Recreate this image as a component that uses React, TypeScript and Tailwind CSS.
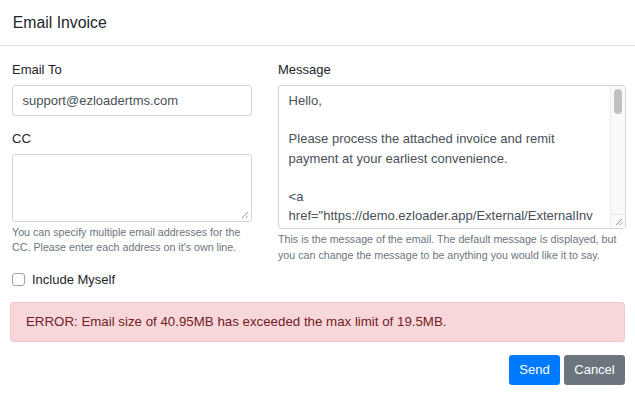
import React from 'react';

const Grip: React.FC = () => (
  <svg className="absolute right-[2px] bottom-[2px]" width="8" height="8" viewBox="0 0 8 8">
    <path d="M7 1 L1 7 M7 4.5 L4.5 7" stroke="#9a9a9a" strokeWidth="1" fill="none" />
  </svg>
);

const App: React.FC = () => {
  const messageLines = [
    'Hello,',
    '',
    'Please process the attached invoice and remit',
    'payment at your earliest convenience.',
    '',
    '<a',
    'href="https://demo.ezloader.app/External/ExternalInv',
    'oiceView?id=8f3c21d0-4b7e-4a6b-9d2e-1c5a7f0e9b44',
  ];

  return (
    <div className="w-[635px] h-[395px] bg-white text-[#212529] font-['Liberation_Sans',Arial,sans-serif] text-[13px] leading-[19.2px]">
      {/* header */}
      <div className="h-[46px] border-b border-[#dee2e6] px-[12.8px] flex items-center">
        <h5 className="text-[15.8px] leading-[19.2px] font-medium">Email Invoice</h5>
      </div>

      {/* body */}
      <div className="px-[10px] pt-[14px]">
        <div className="flex gap-[26px]">
          <div className="w-[240px] ml-[2px] shrink-0">
            <label className="block mb-[6px]">Email To</label>
            <div className="h-[30.4px] border border-[#ced4da] rounded-[3.2px] px-[9.6px] flex items-center text-[#495057]">
              support@ezloadertms.com
            </div>
            <label className="block mt-[13px] mb-[6px]">CC</label>
            <div className="relative h-[68px] border border-[#ced4da] rounded-[3.2px]">
              <Grip />
            </div>
            <p className="mt-[3px] text-[10.7px] leading-[15.36px] text-[#6c757d] whitespace-nowrap">
              You can specify multiple email addresses for the
              <br />
              CC. Please enter each address on it's own line.
            </p>
            <div className="mt-[14px] flex items-center gap-[7px]">
              <span className="w-[13px] h-[13px] border border-[#9ca3af] rounded-[3px] bg-white" />
              <span>Include Myself</span>
            </div>
          </div>

          <div className="flex-1">
            <label className="block mb-[6px]">Message</label>
            <div className="relative h-[144px] border border-[#ced4da] rounded-[3.2px] overflow-hidden">
              <div className="pl-[9.6px] pt-[4.8px] pr-[20px] text-[#495057]">
                {messageLines.map((l, i) => (
                  <div key={i} className="h-[19.2px] whitespace-nowrap overflow-hidden">
                    {l}
                  </div>
                ))}
              </div>
              <div className="absolute top-0 right-0 bottom-0 w-[15px] border-l border-[#ececec] bg-[#fafafa]">
                <div className="absolute top-[3px] left-[3px] w-[8px] h-[25px] rounded-full bg-[#c1c1c1]" />
                <div className="absolute bottom-0 left-0 right-0 h-[14px] border-t border-[#ececec] bg-[#fafafa]">
                  <Grip />
                </div>
              </div>
            </div>
            <p className="mt-[3px] text-[10.7px] leading-[15.36px] text-[#6c757d] whitespace-nowrap">
              This is the message of the email. The default message is displayed, but
              <br />
              you can change the message to be anything you would like it to say.
            </p>
          </div>
        </div>

        <div className="mt-[13px] h-[40px] bg-[#f8d7da] border border-[#f5c6cb] rounded-[3.2px] px-[15px] flex items-center text-[#721c24] text-[13.3px]">
          ERROR: Email size of 40.95MB has exceeded the max limit of 19.5MB.
        </div>

        <div className="mt-[13px] flex justify-end gap-[4px]">
          <button className="h-[30.4px] w-[51px] rounded-[3.2px] bg-[#007bff] text-white">Send</button>
          <button className="h-[30.4px] w-[61px] rounded-[3.2px] bg-[#6c757d] text-white">Cancel</button>
        </div>
      </div>
    </div>
  );
};

export default App;
